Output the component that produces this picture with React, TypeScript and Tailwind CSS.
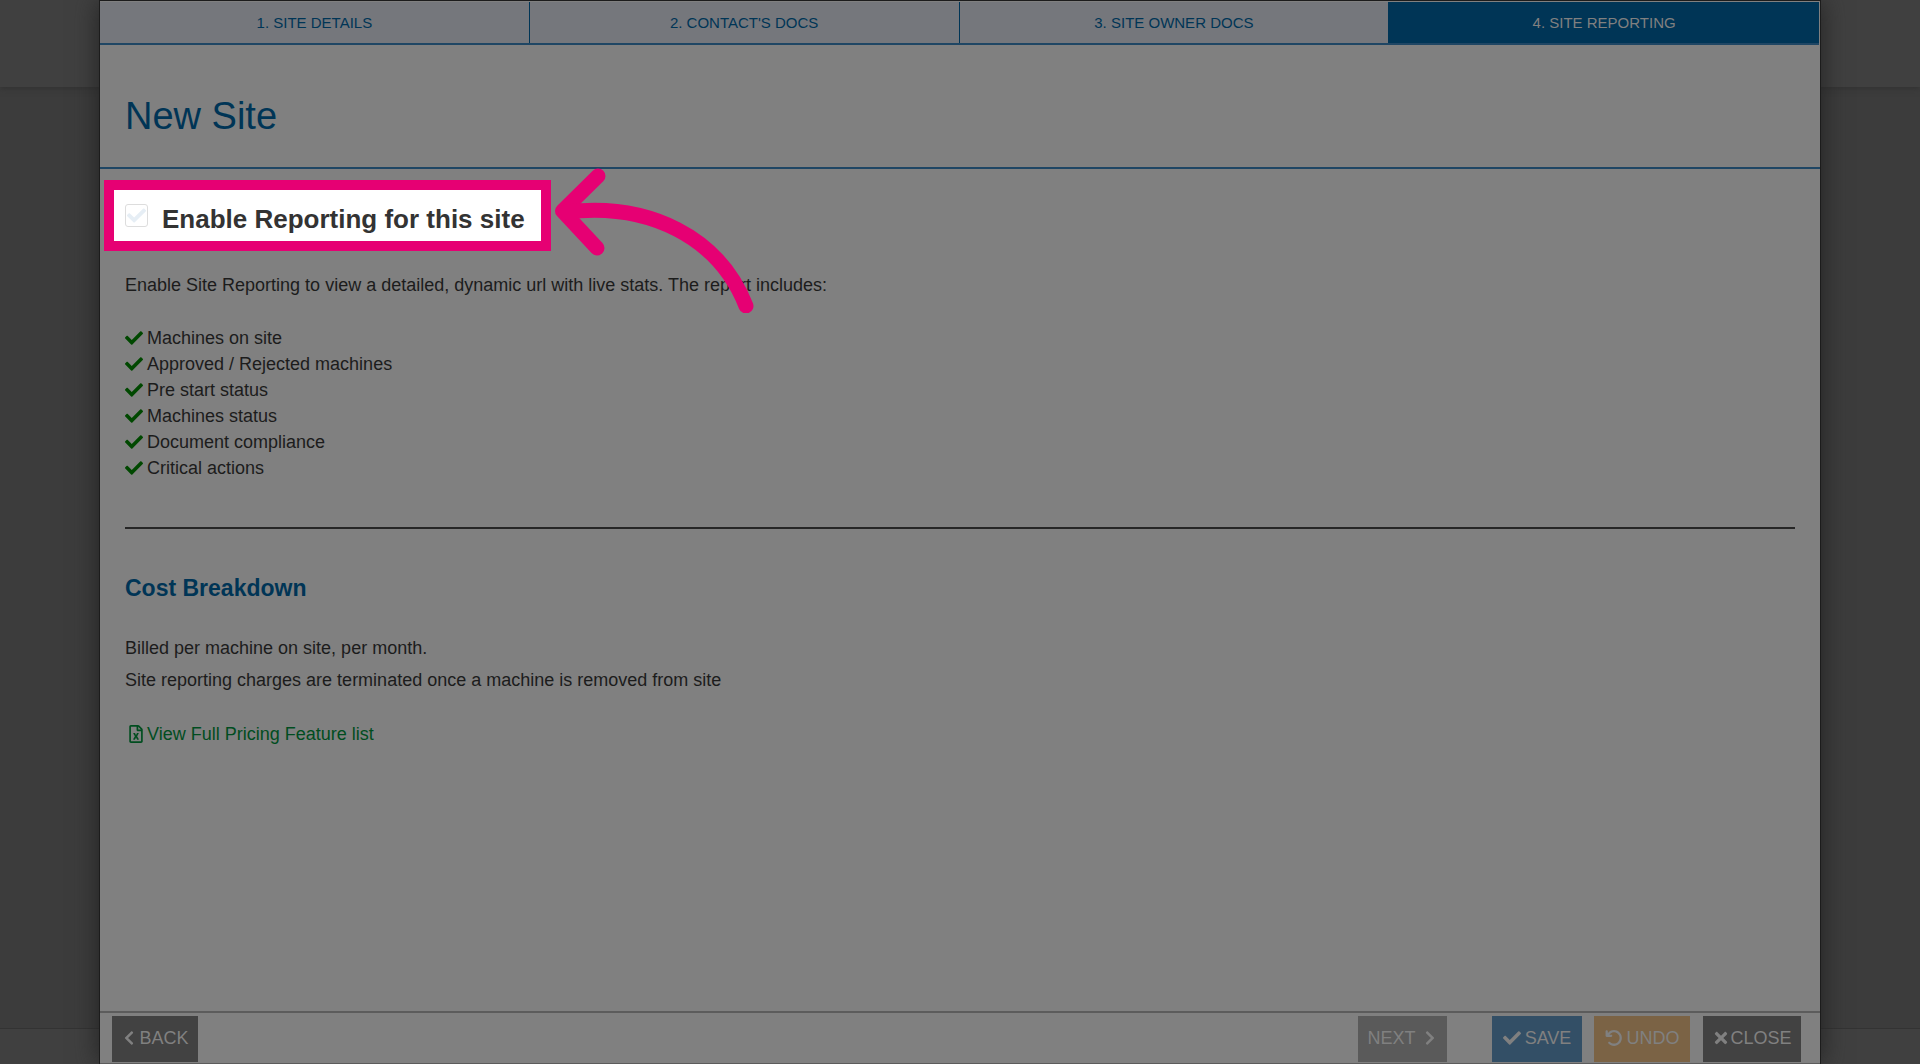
import { FaCheck, FaChevronLeft, FaChevronRight, FaRegFileExcel, FaTimes } from "react-icons/fa";
import { FaArrowRotateLeft } from "react-icons/fa6";

const tabs = ["1. Site Details", "2. Contact's Docs", "3. Site Owner Docs", "4. Site Reporting"];

const features = [
  "Machines on site",
  "Approved / Rejected machines",
  "Pre start status",
  "Machines status",
  "Document compliance",
  "Critical actions",
];

const buttonBase = "flex h-[46px] items-center justify-center pb-0.5 text-lg uppercase text-[#808080]";

const Tabs = () => (
  <nav className="mr-px mt-px grid grid-cols-4 border-b-2 border-[#1f4664]">
    {tabs.map((tab, index) => (
      <button
        key={tab}
        type="button"
        className={
          index === 3
            ? "h-[41px] bg-[#003556] text-[15px] uppercase text-[#808080]"
            : "h-[41px] border-r border-[#003556] bg-[#75777c] text-[15px] uppercase text-[#003556]"
        }
      >
        {tab}
      </button>
    ))}
  </nav>
);

const Arrow = () => (
  <svg
    className="pointer-events-none absolute -top-[13px] left-[450px] h-[146px] w-[200px]"
    viewBox="0 0 200 146"
    fill="none"
    stroke="#e60073"
    strokeWidth="15"
    strokeLinecap="round"
    strokeLinejoin="round"
  >
    <path d="M44 9 8.5 44 43 81" />
    <path d="M12 45C95 35 165 70 192 139" />
  </svg>
);

const Footer = () => (
  <footer className="flex border-t-2 border-b border-[#5c5c5c] pt-[3px] pr-[19px] pb-px pl-3">
    <button type="button" className={`${buttonBase} w-[86px] gap-0.5 bg-[#424242]`}>
      <FaChevronLeft size={16} />
      Back
    </button>
    <button type="button" className={`${buttonBase} ml-auto w-[89px] gap-1.5 bg-[#5a5a5a]`}>
      Next
      <FaChevronRight size={16} />
    </button>
    <button type="button" className={`${buttonBase} ml-[45px] w-[90px] gap-1 bg-[#334f66]`}>
      <FaCheck size={18} />
      Save
    </button>
    <button type="button" className={`${buttonBase} ml-3 w-24 gap-1 bg-[#7b6345]`}>
      <FaArrowRotateLeft size={18} />
      Undo
    </button>
    <button type="button" className={`${buttonBase} ml-[13px] w-[98px] bg-[#424242]`}>
      <FaTimes size={18} />
      Close
    </button>
  </footer>
);

const App = () => {
  return (
    <div className="relative isolate flex min-h-screen justify-center bg-[#3c3c3c] font-['Liberation_Sans',Arial,sans-serif] text-lg text-[#1c1c1c]">
      {/* Page behind the dialog */}
      <div className="absolute inset-0 -z-10 flex flex-col justify-between">
        <div className="h-[87px] bg-[#404040] shadow-[0_1px_6px_#303030]" />
        <div className="h-9 border-t border-[#333333] bg-[#404040]" />
      </div>

      <div className="mx-[99px] flex flex-1 flex-col border border-b-0 border-[#1c1c1c] bg-[#808080] shadow-[0_0_24px_#222222]">
        <Tabs />

        <header className="border-b-2 border-[#1f4664] px-[25px]">
          <h1 className="pt-[53px] pb-[33px] text-[38px] leading-[36px] text-[#003556]">New Site</h1>
        </header>

        <main className="flex-1 pt-[11px]">
          {/* Highlighted option with its pointer */}
          <div className="relative ml-1">
            <label className="flex h-[71px] w-[447px] items-center border-10 border-[#e60073] bg-white pl-[11px] text-[26px] font-bold text-[#333333]">
              <span className="relative mr-[14px] size-[23px]">
                <input
                  type="checkbox"
                  className="block size-full appearance-none rounded-[3px] border border-[#dddddd] bg-white"
                />
                <FaCheck size={19} className="pointer-events-none absolute top-[2px] left-[2px] text-[#e6eef5]" />
              </span>
              <span className="pt-2">Enable Reporting for this site</span>
            </label>
            <Arrow />
          </div>

          <div className="px-[25px]">
            <p className="mt-[21px] leading-[26px]">
              Enable Site Reporting to view a detailed, dynamic url with live stats. The report includes:
            </p>

            <ul className="mt-[27px] leading-[26px]">
              {features.map((feature) => (
                <li key={feature} className="flex items-center gap-1">
                  <FaCheck size={18} className="text-[#004800]" />
                  {feature}
                </li>
              ))}
            </ul>

            <hr className="mt-[46px] border-t-2 border-[#262626]" />

            <h2 className="mt-[43px] text-[23px] leading-8 font-bold text-[#003556]">Cost Breakdown</h2>
            <p className="mt-7 leading-8">Billed per machine on site, per month.</p>
            <p className="leading-8">Site reporting charges are terminated once a machine is removed from site</p>

            <a href="#pricing" className="mt-6 flex items-center gap-0.5 pl-0.5 text-[#004d1f]">
              <FaRegFileExcel size={18} />
              View Full Pricing Feature list
            </a>
          </div>
        </main>

        <Footer />
      </div>
    </div>
  );
};

export default App;
